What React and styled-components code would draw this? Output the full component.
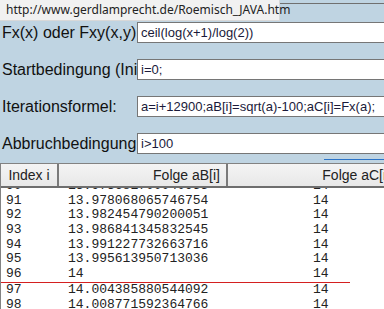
import React from 'react'
import styled, { createGlobalStyle } from 'styled-components'

const GlobalStyle = createGlobalStyle`
  html, body {
    margin: 0;
    padding: 0;
    background: #bfd4e2;
    overflow: hidden;
  }
  body {
    width: 384px;
    height: 309px;
    font-family: "Liberation Sans", Arial, sans-serif;
  }
`;

const fields = [
  { label: 'Fx(x) oder Fxy(x,y)', value: 'ceil(log(x+1)/log(2))' },
  { label: 'Startbedingung (Initialisierung)', value: 'i=0;' },
  { label: 'Iterationsformel:', value: 'a=i+12900;aB[i]=sqrt(a)-100;aC[i]=Fx(a);' },
  { label: 'Abbruchbedingung', value: 'i>100' },
];

const rows = [
  ['90', '13.973681700040955', '14'],
  ['91', '13.978068065746754', '14'],
  ['92', '13.982454790200051', '14'],
  ['93', '13.986841345832545', '14'],
  ['94', '13.991227732663716', '14'],
  ['95', '13.995613950713036', '14'],
  ['96', '14', '14'],
  ['97', '14.004385880544092', '14'],
  ['98', '14.008771592364766', '14'],
];

export default function App() {
  return (
    <>
      <GlobalStyle />
      <Page>
        <Tooltip>http://www.gerdlamprecht.de/Roemisch_JAVA.htm</Tooltip>
        <TopEdge />
        <Form>
          {fields.map((f) => (
            <Row key={f.label}>
              <Label>{f.label}</Label>
              <Input readOnly value={f.value} />
            </Row>
          ))}
        </Form>
        <FocusMark />
        <Table>
          <Head>
            <HeadCell $w={58} $align="center">Index i</HeadCell>
            <HeadCell $w={169} $align="right">Folge aB[i]</HeadCell>
            <HeadCell $w={170} $align="right">Folge aC[i]</HeadCell>
          </Head>
          <Body>
            <Scroller>
              {rows.map((r) => (
                <DataRow key={r[0]} $mark={r[0] === '96'}>
                  <Cell $w={62}>{r[0]}</Cell>
                  <Cell $w={245}>{r[1]}</Cell>
                  <Cell $w={60}>{r[2]}</Cell>
                </DataRow>
              ))}
            </Scroller>
          </Body>
        </Table>
      </Page>
    </>
  )
}

const Page = styled.div`
  position: relative;
  width: 384px;
  height: 309px;
  overflow: hidden;
`;

const Tooltip = styled.div`
  position: absolute;
  top: 0;
  left: 0;
  width: 280px;
  height: 21px;
  padding-left: 6px;
  box-sizing: border-box;
  background: #f1f1f1;
  border-right: 1px solid #d8d8d8;
  border-bottom: 1px solid #d8d8d8;
  font-family: "Noto Sans", "Liberation Sans", sans-serif;
  font-size: 12px;
  line-height: 20px;
  color: #222;
  z-index: 2;
`;

const TopEdge = styled.div`
  height: 3px;
  border-bottom: 1px solid #707070;
`;

const Form = styled.div`
  display: flex;
  flex-direction: column;
  gap: 16px;
  padding-top: 18px;
`;

const Row = styled.div`
  display: grid;
  grid-template-columns: 137px 1fr;
  align-items: center;
  height: 21px;
`;

const Label = styled.div`
  padding-left: 2px;
  font-size: 16px;
  color: #111;
  white-space: nowrap;
  overflow: hidden;
`;

const Input = styled.input`
  box-sizing: border-box;
  width: 260px;
  height: 21px;
  margin: 0;
  padding: 0 3px;
  border: 1px solid #767676;
  border-right: none;
  background: #fff;
  font-family: "Liberation Sans", Arial, sans-serif;
  font-size: 13px;
  color: #1a1a3a;
  outline: none;
`;

const FocusMark = styled.div`
  margin: 5px 0 0 324px;
  height: 1px;
  background: #2a73c8;
`;

const Table = styled.div`
  margin-top: 3px;
  border-top: 1px solid #828282;
  border-left: 1px solid #828282;
  background: #fff;
`;

const Head = styled.div`
  display: flex;
  height: 22px;
  background: linear-gradient(#f4f4f4, #e8e8e8);
  border-bottom: 2px solid #6e6e6e;
`;

const HeadCell = styled.div`
  flex: 0 0 ${({ $w }) => $w}px;
  box-sizing: border-box;
  padding: 0 6px;
  border-right: 2px solid #7a7a7a;
  text-align: ${({ $align }) => $align};
  font-size: 14px;
  line-height: 22px;
  color: #222;
`;

const Body = styled.div`
  height: 130px;
  overflow: hidden;
  font-family: "Liberation Mono", "Courier New", monospace;
  font-size: 13px;
  color: #222;
`;

const Scroller = styled.div`
  margin-top: -9px;
`;

const DataRow = styled.div`
  display: flex;
  height: 14.7px;
  line-height: 14.7px;
  padding-left: 5px;
  width: 344px;
  border-bottom: 1px solid ${({ $mark }) => ($mark ? '#d42020' : 'transparent')};
  margin-bottom: ${({ $mark }) => ($mark ? '0' : '-1px')};
`;

const Cell = styled.div`
  flex: 0 0 ${({ $w }) => $w}px;
  white-space: nowrap;
`;
